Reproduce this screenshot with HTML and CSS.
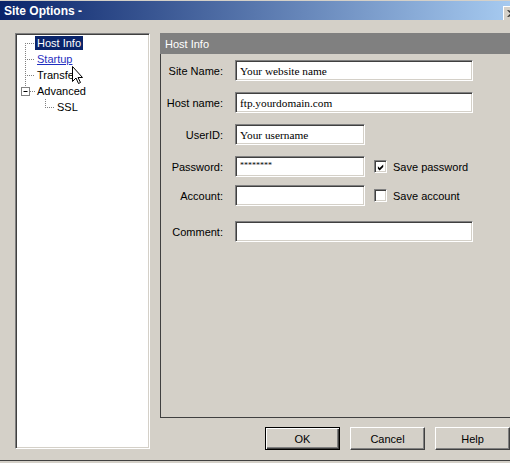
FILE: index.html
```html
<!DOCTYPE html>
<html>
<head>
<meta charset="utf-8">
<link rel="stylesheet" href="styles.css">
</head>
<body>
<div class="window">
  <div class="titlebar">
    <span class="title">Site Options -</span>
    <span class="close"><svg width="16" height="14" viewBox="0 0 16 14"><path d="M4 3 L11 10 M5 3 L12 10 M11 3 L4 10 M12 3 L5 10" stroke="#000" stroke-width="1"/></svg></span>
  </div>
  <div class="client">
    <div class="tree">
      <div class="node">
        <svg class="twig" width="18" height="16" viewBox="0 0 18 16"><path d="M8.5 8 V16 M8 8.5 H18" class="dots"/></svg>
        <span class="label sel">Host Info</span>
      </div>
      <div class="node">
        <svg class="twig" width="18" height="16" viewBox="0 0 18 16"><path d="M8.5 0 V16 M8 8.5 H18" class="dots"/></svg>
        <span class="label link">Startup</span>
      </div>
      <div class="node">
        <svg class="twig" width="18" height="16" viewBox="0 0 18 16"><path d="M8.5 0 V16 M8 8.5 H18" class="dots"/></svg>
        <span class="label">Transfer</span>
      </div>
      <div class="node">
        <svg class="twig" width="18" height="16" viewBox="0 0 18 16"><path d="M8.5 0 V4" class="dots"/><path d="M13 8.5 H18" class="dots"/><rect x="4.5" y="4.5" width="8" height="8" fill="#fff" stroke="#808080"/><path d="M6.5 8.5 H10.5" stroke="#000"/></svg>
        <span class="label">Advanced</span>
      </div>
      <div class="node">
        <svg class="twig" width="38" height="16" viewBox="0 0 38 16"><path d="M28.5 0 V8 M28 8.5 H38" class="dots"/></svg>
        <span class="label">SSL</span>
      </div>
      <svg class="cursor" width="12" height="19" viewBox="0 0 12 19"><path d="M0.5 0.5 V15.5 L4 12 L6.5 17.5 L8.5 16.5 L6 11.5 H10.5 Z" fill="#fff" stroke="#000"/></svg>
    </div>
    <div class="main">
      <div class="panel">
        <div class="panel-head">Host Info</div>
        <div class="form">
          <div class="row first">
            <span class="lbl">Site Name:</span>
            <span class="input long">Your website name</span>
          </div>
          <div class="row">
            <span class="lbl">Host name:</span>
            <span class="input long">ftp.yourdomain.com</span>
          </div>
          <div class="row">
            <span class="lbl">UserID:</span>
            <span class="input short">Your username</span>
          </div>
          <div class="row">
            <span class="lbl">Password:</span>
            <span class="input short pw">********</span>
            <span class="check"><svg width="9" height="9" viewBox="0 0 9 9"><path d="M1 3 L3 5 L7 1 V4 L3 8 L1 6 Z" fill="#000"/></svg></span>
            <span class="cklbl">Save password</span>
          </div>
          <div class="row gap-s">
            <span class="lbl">Account:</span>
            <span class="input short"></span>
            <span class="check"></span>
            <span class="cklbl">Save account</span>
          </div>
          <div class="row gap-l">
            <span class="lbl">Comment:</span>
            <span class="input long"></span>
          </div>
        </div>
      </div>
      <div class="buttons">
        <span class="btn default">OK</span>
        <span class="btn">Cancel</span>
        <span class="btn">Help</span>
      </div>
    </div>
  </div>
</div>
</body>
</html>
```
FILE: styles.css
```css
* { box-sizing: border-box; }
html, body { margin: 0; padding: 0; }
body {
  background: #d4d0c8;
  font-family: "Liberation Sans", Arial, sans-serif;
  font-size: 11px;
  color: #000;
}
.window {
  width: 510px;
  height: 463px;
  overflow: hidden;
  background: #d4d0c8;
}
.titlebar {
  height: 20px;
  border-top: 1px solid #d4d0c8;
  background: linear-gradient(to right, #0a246a, #a6caf0);
  display: flex;
  align-items: center;
  justify-content: space-between;
  padding-left: 4px;
}
.title {
  color: #fff;
  font-weight: bold;
  font-size: 12px;
  line-height: 14px;
}
.close {
  width: 16px;
  height: 14px;
  margin-right: -9px;
  margin-top: 5px;
  background: #d4d0c8;
  border-top: 1px solid #fff;
  border-left: 1px solid #fff;
  display: flex;
}
.client {
  height: 441px;
  border-bottom: 1px solid #404040;
  display: flex;
  padding: 13px 0 0 15px;
  gap: 10px;
}
.tree {
  position: relative;
  width: 136px;
  height: 416px;
  background: #fff;
  border: 1px solid;
  border-color: #808080 #fff #fff #808080;
  box-shadow: inset 1px 1px #404040, inset -1px -1px #d4d0c8;
  padding: 1px;
}
.node {
  display: flex;
  height: 16px;
  align-items: center;
}
.twig { display: block; flex: none; }
.dots {
  fill: none;
  stroke: #808080;
  stroke-dasharray: 1 1;
}
.label {
  padding: 0 2px;
  line-height: 14px;
  height: 14px;
  white-space: nowrap;
}
.sel { background: #0a246a; color: #fff; }
.link { color: #1f2fc0; text-decoration: underline; }
.cursor {
  position: absolute;
  left: 56px;
  top: 32px;
}
.main {
  flex: 1;
  display: flex;
  flex-direction: column;
}
.panel {
  height: 385px;
  border-left: 1px solid #404040;
  border-bottom: 1px solid #404040;
}
.panel-head {
  height: 21px;
  background: #808080;
  color: #fff;
  padding-left: 4px;
  display: flex;
  align-items: center;
  margin-left: -1px;
  padding-left: 5px;
}
.form {
  display: flex;
  flex-direction: column;
}
.row {
  display: flex;
  align-items: center;
  height: 21px;
  margin-top: 11px;
}
.row.first { margin-top: 6px; }
.row.gap-s { margin-top: 8px; }
.row.gap-l { margin-top: 15px; }
.lbl {
  width: 62px;
  margin-right: 12px;
  text-align: right;
  white-space: nowrap;
}
.input {
  height: 21px;
  background: #fff;
  border: 1px solid;
  border-color: #808080 #fff #fff #808080;
  box-shadow: inset 1px 1px #404040, inset -1px -1px #d4d0c8;
  padding: 0 3px 0 4px;
  display: flex;
  align-items: center;
  font-family: "Liberation Serif", "Times New Roman", serif;
  font-size: 11.3px;
  white-space: nowrap;
}
.long { width: 238px; }
.short { width: 130px; }
.pw { font-size: 8px; align-items: flex-start; padding-top: 4px; letter-spacing: 0; }
.check {
  width: 13px;
  height: 13px;
  margin-left: 9px;
  background: #fff;
  border: 1px solid;
  border-color: #808080 #fff #fff #808080;
  box-shadow: inset 1px 1px #404040, inset -1px -1px #d4d0c8;
  padding: 1px;
  display: flex;
}
.check svg { display: block; margin: 1px 0 0 1px; }
.cklbl { margin-left: 6px; white-space: nowrap; }
.buttons {
  display: flex;
  gap: 10px;
  margin-top: 9px;
  padding-left: 105px;
}
.btn {
  flex: none;
  width: 75px;
  height: 23px;
  display: flex;
  align-items: center;
  justify-content: center;
  border: 1px solid;
  border-color: #fff #404040 #404040 #fff;
  box-shadow: inset -1px -1px #808080;
}
.btn.default {
  border: 1px solid #000;
  box-shadow: inset 1px 1px #fff, inset -1px -1px #404040, inset -2px -2px #808080;
}
```
